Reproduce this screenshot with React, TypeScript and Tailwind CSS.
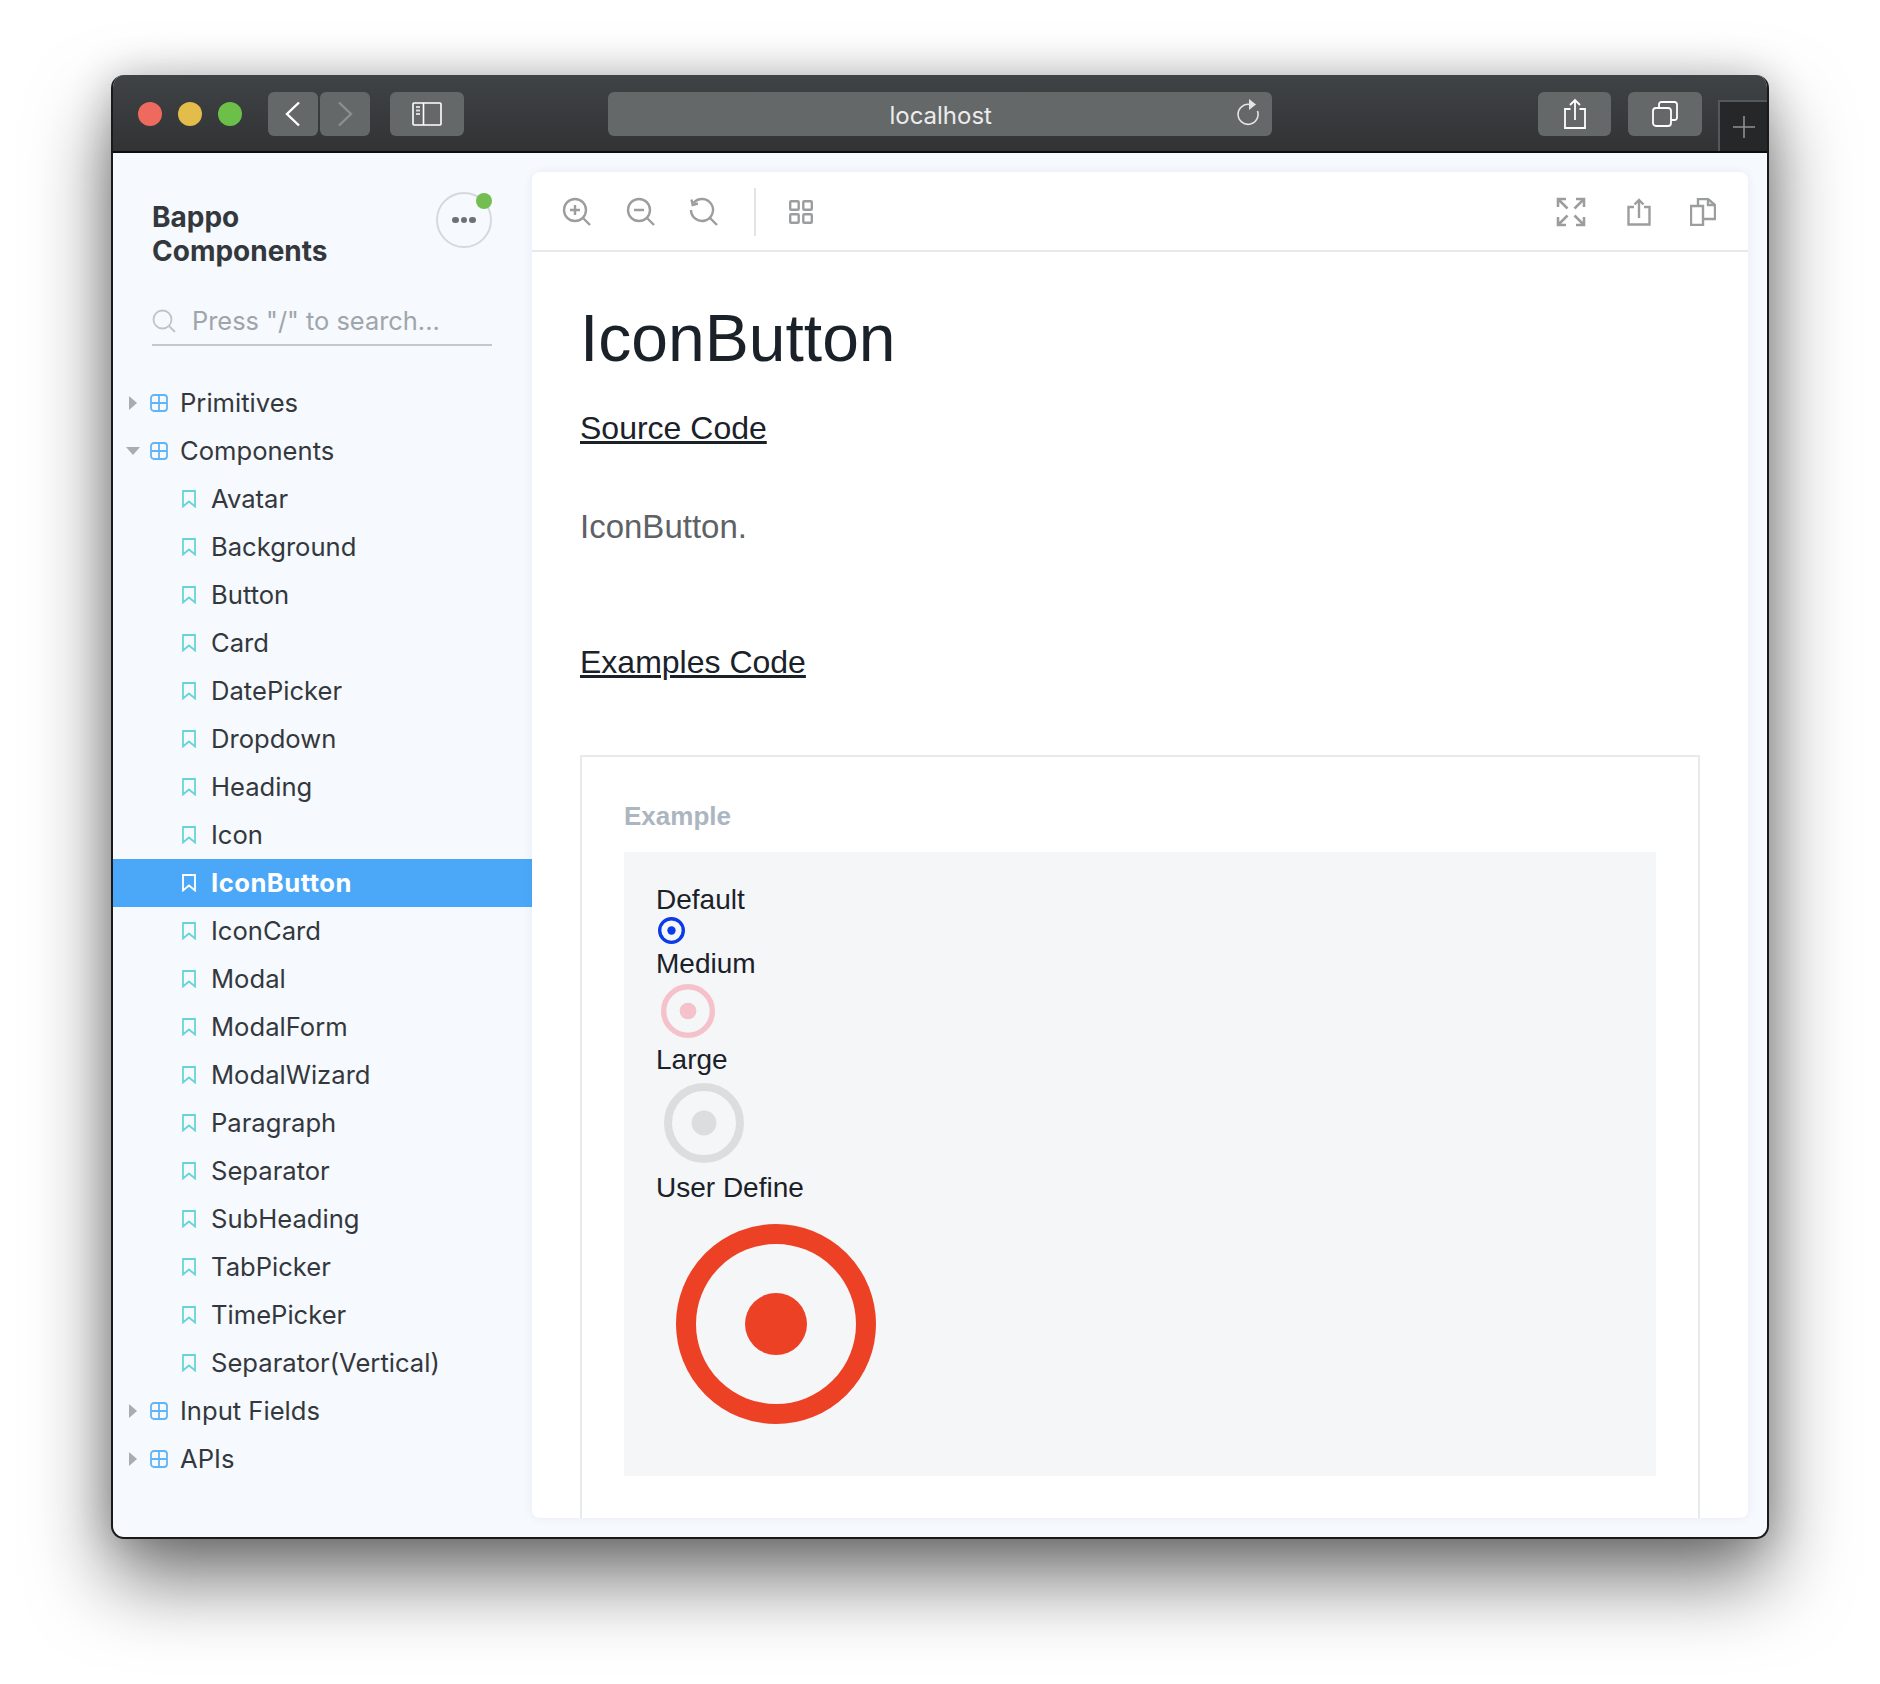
import React from "react";

const children = [
  "Avatar",
  "Background",
  "Button",
  "Card",
  "DatePicker",
  "Dropdown",
  "Heading",
  "Icon",
  "IconButton",
  "IconCard",
  "Modal",
  "ModalForm",
  "ModalWizard",
  "Paragraph",
  "Separator",
  "SubHeading",
  "TabPicker",
  "TimePicker",
  "Separator(Vertical)",
];

const GridIcon = () => (
  <svg width="18" height="18" viewBox="0 0 18 18" fill="none" stroke="#62b4f6" strokeWidth="1.8">
    <rect x="1" y="1" width="16" height="16" rx="3" />
    <path d="M9 1v16M1 9h16" />
  </svg>
);

const BookmarkIcon = ({ color }: { color: string }) => (
  <svg width="14" height="18" viewBox="0 0 14 18" fill="none" stroke={color} strokeWidth="1.8">
    <path d="M1 1h12v15.5L7 11.5 1 16.5z" />
  </svg>
);

const Caret = ({ open }: { open?: boolean }) =>
  open ? (
    <svg width="14" height="8" viewBox="0 0 14 8" fill="#a9adb0">
      <path d="M0 0h14L7 8z" />
    </svg>
  ) : (
    <svg width="8" height="14" viewBox="0 0 8 14" fill="#a9adb0">
      <path d="M0 0l8 7-8 7z" />
    </svg>
  );

const TreeGroup = ({ label, open }: { label: string; open?: boolean }) => (
  <div className="flex h-12 items-center">
    <div className="flex w-[37px] items-center justify-end pr-[10px]">
      <span className="flex w-[14px] justify-center">
        <Caret open={open} />
      </span>
    </div>
    <GridIcon />
    <span className="ml-[12px] pt-[1px] text-[25.6px] text-[#33383d]">{label}</span>
  </div>
);

const TreeItem = ({ label }: { label: string }) => {
  const active = label === "IconButton";
  return (
    <div className={`flex h-12 items-center pl-[69px] ${active ? "bg-[#4ba8f8]" : ""}`}>
      <BookmarkIcon color={active ? "#ffffff" : "#66d5d5"} />
      <span
        className={`ml-[15px] pt-[1px] text-[25.6px] ${
          active ? "font-bold tracking-[0.5px] text-white" : "text-[#33383d]"
        }`}
      >
        {label}
      </span>
    </div>
  );
};

const ToolIcon = ({ children: inner, className }: { children: React.ReactNode; className?: string }) => (
  <svg
    width="30"
    height="30"
    viewBox="0 0 30 30"
    fill="none"
    stroke="#9b9d9f"
    strokeWidth="2.4"
    className={className}
  >
    {inner}
  </svg>
);

const RadioIcon = ({
  size,
  color,
  weight = 2,
  className,
}: {
  size: number;
  color: string;
  weight?: number;
  className?: string;
}) => (
  <svg width={size} height={size} viewBox="0 0 20 20" className={`block ${className ?? ""}`}>
    <circle cx="10" cy="10" r={10 - weight / 2} fill="none" stroke={color} strokeWidth={weight} />
    <circle cx="10" cy="10" r="3.100" fill={color} />
  </svg>
);

const BarButton = ({ className, children: inner }: { className: string; children: React.ReactNode }) => (
  <div className={`flex h-11 items-center justify-center rounded-[6px] bg-[#656869] ${className}`}>{inner}</div>
);

const TitleBar = () => (
  <div className="flex h-[78px] shrink-0 border-b-2 border-[#0d0d0d] bg-gradient-to-b from-[#404345] to-[#313335] pt-[17px] pl-[25px]">
    <div className="flex h-11 items-center gap-4">
      <span className="h-6 w-6 rounded-full bg-[#ee6a5f]" />
      <span className="h-6 w-6 rounded-full bg-[#e3bc4a]" />
      <span className="h-6 w-6 rounded-full bg-[#6cc04a]" />
    </div>
    <div className="ml-[26px] flex gap-[2px]">
      <BarButton className="w-[50px]">
        <svg width="16" height="26" viewBox="0 0 16 26" fill="none" stroke="#ffffff" strokeWidth="2.4">
          <path d="M14 1.500L2 13l12 11.500" />
        </svg>
      </BarButton>
      <BarButton className="w-[50px]">
        <svg width="16" height="26" viewBox="0 0 16 26" fill="none" stroke="#8c8f90" strokeWidth="2.4">
          <path d="M2 1.500L14 13 2 24.500" />
        </svg>
      </BarButton>
    </div>
    <BarButton className="ml-[20px] w-[74px]">
      <svg width="30" height="24" viewBox="0 0 30 24" fill="none" stroke="#ffffff" strokeWidth="1.6">
        <rect x="1" y="1" width="28" height="22" rx="1" />
        <path d="M11.500 1v22" />
        <path d="M4 5h4M4 8.500h4M4 12h4" strokeWidth="1.8" stroke="#d8d8d8" />
      </svg>
    </BarButton>
    <BarButton className="relative ml-[144px] w-[666px]">
      <span className="pl-[2px] pt-[4px] font-['Inter',sans-serif] text-[24px] text-[#ececec]">localhost</span>
      <svg
        width="24"
        height="28"
        viewBox="0 0 24 28"
        fill="none"
        stroke="#e4e4e4"
        strokeWidth="1.6"
        className="absolute right-[12px] top-[6px]"
      >
        <path d="M14 6.500A10 10 0 1 0 21.500 13" />
        <path d="M13 1l7 5.500-7 5.500z" fill="#e4e4e4" stroke="none" />
      </svg>
    </BarButton>
    <BarButton className="ml-[266px] w-[74px]">
      <svg width="24" height="32" viewBox="0 0 24 32" fill="none" stroke="#ffffff" strokeWidth="1.8">
        <path d="M7.500 11H2v19h20V11h-5.500" />
        <path d="M12 22V2M7 7l5-5 5 5" />
      </svg>
    </BarButton>
    <BarButton className="ml-[17px] w-[74px]">
      <svg width="26" height="26" viewBox="0 0 26 26" fill="none" stroke="#ffffff" strokeWidth="1.8">
        <rect x="1" y="7" width="18" height="18" rx="3" />
        <path d="M7 7V3.500A2.500 2.500 0 0 1 9.500 1H22.500A2.500 2.500 0 0 1 25 3.500V16A2.500 2.500 0 0 1 22.500 19H19" />
      </svg>
    </BarButton>
    <div className="ml-[16px] mt-[8px] flex w-[49px] items-center justify-center border-t-2 border-l-2 border-[#55585a] bg-[#252729]">
      <svg width="24" height="24" viewBox="0 0 24 24" stroke="#8f9193" strokeWidth="1.6">
        <path d="M12 1v22M1 12h22" />
      </svg>
    </div>
  </div>
);

const Sidebar = () => (
  <aside className="w-[419px] shrink-0 font-['Inter',sans-serif]">
    <div className="flex justify-between pt-[39px] pl-[39px] pr-[40px]">
      <h1 className="pt-[8px] text-[28px] leading-[34px] font-bold text-[#33383d]">
        Bappo
        <br />
        Components
      </h1>
      <div className="relative flex h-[56px] w-[56px] items-center justify-center rounded-full border-2 border-[#d5d9dc]">
        <span className="flex gap-[2px]">
          <span className="h-[6.5px] w-[6.5px] rounded-full bg-[#6f7275]" />
          <span className="h-[6.5px] w-[6.5px] rounded-full bg-[#6f7275]" />
          <span className="h-[6.5px] w-[6.5px] rounded-full bg-[#6f7275]" />
        </span>
        <span className="absolute -right-[2px] -top-[1px] h-4 w-4 rounded-full bg-[#74bd50]" />
      </div>
    </div>
    <div className="ml-[39px] mr-[40px] mt-[32px] flex h-[46px] items-center border-b-2 border-[#c4c8cb] pb-[2px]">
      <svg width="24" height="24" viewBox="0 0 24 24" fill="none" stroke="#c0c4c7" strokeWidth="1.8">
        <circle cx="10.500" cy="10.500" r="9" />
        <path d="M17 17l6 6" />
      </svg>
      <span className="ml-[16px] text-[25.4px] text-[#a0a5aa]">Press "/" to search...</span>
    </div>
    <nav className="mt-[33px]">
      <TreeGroup label="Primitives" />
      <TreeGroup label="Components" open />
      {children.map((c) => (
        <TreeItem key={c} label={c} />
      ))}
      <TreeGroup label="Input Fields" />
      <TreeGroup label="APIs" />
    </nav>
  </aside>
);

const Toolbar = () => (
  <div className="flex h-[80px] shrink-0 items-center border-b-2 border-[#e6eaed] pl-[30px] pr-[32px] pt-[2px]">
    <ToolIcon>
      <circle cx="13" cy="13" r="11" />
      <path d="M21 21l7 7M8 13h10M13 8v10" />
    </ToolIcon>
    <ToolIcon className="ml-[34px]">
      <circle cx="13" cy="13" r="11" />
      <path d="M21 21l7 7M8 13h10" />
    </ToolIcon>
    <ToolIcon className="ml-[33px]">
      <path d="M4.500 6A11 11 0 1 1 2 13" />
      <path d="M2.500 2.500l1.200 5.500 5.300-1.500" />
      <path d="M21 21l7 7" />
    </ToolIcon>
    <div className="ml-[35px] h-12 w-[2px] bg-[#e2e4e6]" />
    <svg width="24" height="24" viewBox="0 0 24 24" fill="none" stroke="#9b9d9f" strokeWidth="2.4" className="ml-[33px]">
      <rect x="1.200" y="1.200" width="8.500" height="8.500" rx="1" />
      <rect x="14.300" y="1.200" width="8.500" height="8.500" rx="1" />
      <rect x="1.200" y="14.300" width="8.500" height="8.500" rx="1" />
      <rect x="14.300" y="14.300" width="8.500" height="8.500" rx="1" />
    </svg>
    <div className="flex-1" />
    <ToolIcon>
      <path d="M2 10V2h8M2 2l9.500 9.500M20 2h8v8M28 2l-9.500 9.500M2 20v8h8M2 28l9.500-9.500M28 20v8h-8M28 28l-9.500-9.500" strokeWidth="2.6" />
    </ToolIcon>
    <svg width="24" height="28" viewBox="0 0 24 28" fill="none" stroke="#9b9d9f" strokeWidth="2.4" className="ml-[41px]">
      <path d="M7 9H1.500v17.500h21V9H17" />
      <path d="M12 20V2M7.500 6.500L12 2l4.500 4.500" />
    </svg>
    <svg width="26" height="28" viewBox="0 0 26 28" fill="none" stroke="#9b9d9f" strokeWidth="2.4" className="ml-[39px]">
      <path d="M1 8h12v19H1z" />
      <path d="M8 8V1h10l7 6v14H13" />
      <path d="M18 1v6h7" />
    </svg>
  </div>
);

const Content = () => (
  <div className="min-h-0 flex-1 overflow-hidden px-[48px] font-['Liberation_Sans',sans-serif]">
    <h1 className="mt-[49px] text-[66px] leading-[74px] text-[#1a2129]">IconButton</h1>
    <a href="#" className="mt-[35px] block text-[32px] leading-[36px] text-[#1a2129] underline">
      Source Code
    </a>
    <p className="mt-[63px] text-[33px] leading-[36px] text-[#5e6266]">IconButton.</p>
    <a href="#" className="mt-[99px] block text-[32px] leading-[36px] text-[#1a2129] underline">
      Examples Code
    </a>
    <section className="mt-[75px] border-2 border-[#e6eaed] px-[42px] pt-[44px] pb-[60px]">
      <h2 className="text-[26px] leading-[30px] font-bold text-[#abb6c0]">Example</h2>
      <div className="mt-[21px] h-[624px] bg-[#f5f6f8] pt-[31px] pl-[32px] text-[28px] leading-[34px] text-[#1a2129]">
        <div>Default</div>
        <RadioIcon size={27} color="#0b3be8" weight={2.5} className="ml-[2px]" />
        <div className="mt-[3px]">Medium</div>
        <RadioIcon size={54} color="#f5c2cb" className="ml-[5px] mt-[3px]" />
        <div className="mt-[5px]">Large</div>
        <RadioIcon size={80} color="#dcddde" className="ml-[8px] mt-[6px]" />
        <div className="mt-[8px]">User Define</div>
        <RadioIcon size={200} color="#ed4125" className="ml-[20px] mt-[19px]" />
      </div>
    </section>
  </div>
);

const App: React.FC = () => {
  return (
    <div className="h-[1684px] w-[1880px] overflow-hidden bg-white pt-[75px] pl-[111px]">
      <div className="flex h-[1464px] w-[1658px] flex-col overflow-hidden rounded-[13px] border-x-2 border-b-2 border-[#1a1a1a] bg-[#f6f9fe] shadow-[0_40px_80px_rgba(0,0,0,0.55),0_0_40px_rgba(0,0,0,0.2)]">
        <TitleBar />
        <div className="flex min-h-0 flex-1">
          <Sidebar />
          <main className="mt-[19px] mb-[19px] mr-[19px] flex min-w-0 flex-1 flex-col overflow-hidden rounded-[8px] bg-white shadow-[0_0_10px_rgba(60,80,110,0.08)]">
            <Toolbar />
            <Content />
          </main>
        </div>
      </div>
    </div>
  );
};

export default App;
